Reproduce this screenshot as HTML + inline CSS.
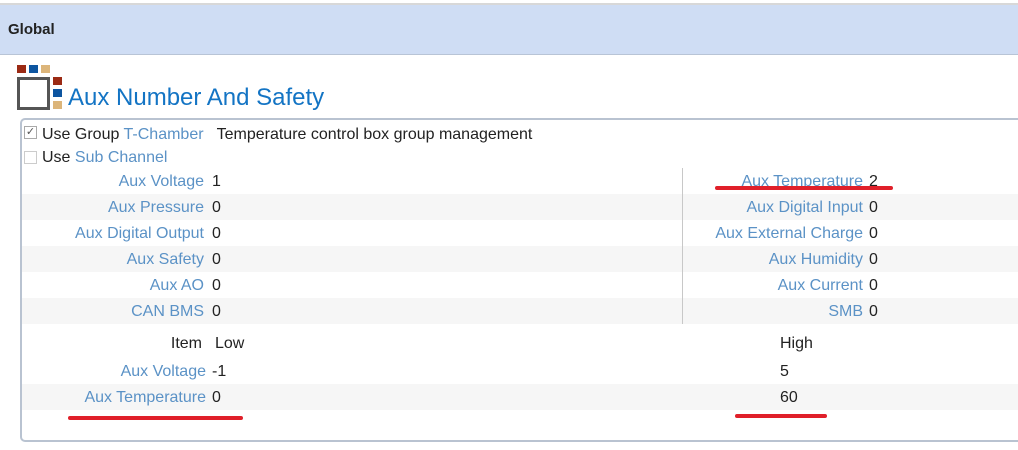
<!DOCTYPE html>
<html><head><style>
body{margin:0;width:1018px;height:450px;background:#fff;font-family:"Liberation Sans","DejaVu Sans",sans-serif;font-size:16px;color:#222;position:relative;overflow:hidden}
.a{position:absolute;white-space:nowrap}
.l{color:#5b92c6}
.r{text-align:right}
.row{position:absolute;left:22px;width:1000px;height:26px}
.g{background:#f6f6f6}
.red{position:absolute;height:4px;background:#e0202a;border-radius:2px}
.sp{display:block;height:8px}
</style></head><body>
<div class="a" style="left:0;top:3px;width:1018px;height:2px;background:#d8d8d8"></div>
<div class="a" style="left:0;top:5px;width:1018px;height:49px;background:#cfddf4;border-bottom:1px solid #b8c4d6"></div>
<div class="a" style="left:8px;top:21px;font-weight:bold;font-size:15px;color:#222">Global</div>
<div class="a" style="left:17px;top:65px;width:9px;height:8px;background:#9b2a14"></div>
<div class="a" style="left:29px;top:65px;width:9px;height:8px;background:#0d55a0"></div>
<div class="a" style="left:41px;top:65px;width:9px;height:8px;background:#dcb57a"></div>
<div class="a" style="left:17px;top:77px;width:27px;height:27px;border:3px solid #555;background:#fff"></div>
<div class="a" style="left:53px;top:77px;width:9px;height:8px;background:#9b2a14"></div>
<div class="a" style="left:53px;top:89px;width:9px;height:8px;background:#0d55a0"></div>
<div class="a" style="left:53px;top:101px;width:9px;height:8px;background:#dcb57a"></div>
<div class="a" style="left:68px;top:84px;font-size:24px;color:#1374c4">Aux Number And Safety</div>
<div class="a" style="left:20px;top:118px;width:1010px;height:320px;border:2px solid #b9c3d1;border-radius:5px;background:#fff"></div>
<div class="a" style="left:24px;top:126px;width:11px;height:11px;border:1px solid #aaa;font-size:11px;line-height:11px;color:#555;text-align:center">✓</div>
<div class="a" style="left:42px;top:126px">Use Group <span class="l">T-Chamber</span>&nbsp;&nbsp; Temperature control box group management</div>
<div class="a" style="left:24px;top:151px;width:11px;height:11px;border:1px solid #ccc"></div>
<div class="a" style="left:42px;top:149px">Use <span class="l">Sub Channel</span></div>
<div class="row g" style="top:194px"></div>
<div class="row g" style="top:246px"></div>
<div class="row g" style="top:298px"></div>
<div class="row g" style="top:384px"></div>
<div class="a" style="left:682px;top:168px;width:1px;height:156px;background:#c8c8c8"></div>
<div class="a r l" style="right:814px;top:173px;line-height:18px">Aux Voltage<span class="sp"></span>Aux Pressure<span class="sp"></span>Aux Digital Output<span class="sp"></span>Aux Safety<span class="sp"></span>Aux AO<span class="sp"></span>CAN BMS</div>
<div class="a" style="left:212px;top:173px;line-height:18px">1<span class="sp"></span>0<span class="sp"></span>0<span class="sp"></span>0<span class="sp"></span>0<span class="sp"></span>0</div>
<div class="a r l" style="right:155px;top:173px;line-height:18px">Aux Temperature<span class="sp"></span>Aux Digital Input<span class="sp"></span>Aux External Charge<span class="sp"></span>Aux Humidity<span class="sp"></span>Aux Current<span class="sp"></span>SMB</div>
<div class="a" style="left:869px;top:173px;line-height:18px">2<span class="sp"></span>0<span class="sp"></span>0<span class="sp"></span>0<span class="sp"></span>0<span class="sp"></span>0</div>
<div class="a r" style="right:816px;top:335px">Item</div>
<div class="a" style="left:215px;top:335px">Low</div>
<div class="a" style="left:780px;top:335px">High</div>
<div class="a r l" style="right:812px;top:363px">Aux Voltage</div>
<div class="a" style="left:212px;top:363px">-1</div>
<div class="a" style="left:780px;top:363px">5</div>
<div class="a r l" style="right:812px;top:389px">Aux Temperature</div>
<div class="a" style="left:212px;top:389px">0</div>
<div class="a" style="left:780px;top:389px">60</div>
<div class="red" style="left:715px;top:186px;width:178px"></div>
<div class="red" style="left:68px;top:416px;width:175px"></div>
<div class="red" style="left:735px;top:414px;width:92px"></div>
</body></html>
